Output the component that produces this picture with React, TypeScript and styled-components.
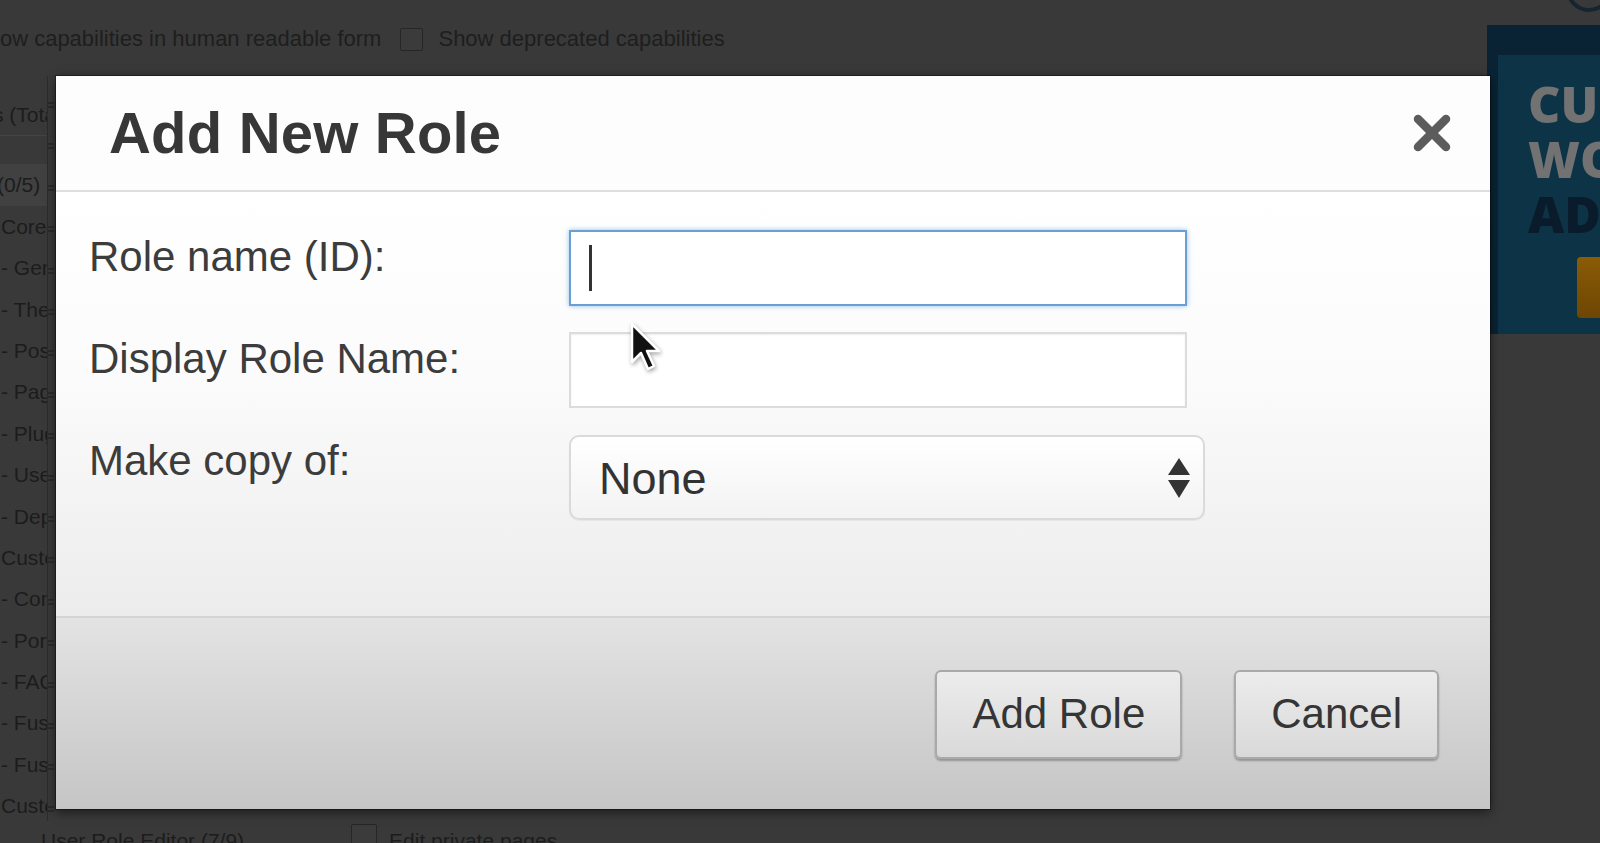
import React from 'react'
import styled, { createGlobalStyle } from 'styled-components'

const GlobalStyle = createGlobalStyle`
    html, body {
        margin: 0;
        padding: 0;
        background: #393939;
        overflow: hidden;
    }
    * { box-sizing: border-box; }
`

const listRows = [
    'Core capabilities',
    '- General',
    '- Themes',
    '- Posts',
    '- Pages',
    '- Plugins',
    '- Users',
    '- Deprecated',
    'Custom capabilities',
    '- Contact Form',
    '- Portfolio',
    '- FAQ',
    '- Fusion Builder',
    '- Fusion Slider',
    'Custom post types',
]

const App = () => {
    return (
        <>
            <GlobalStyle />
            <Page>
                <MainColumn>
                    <TopBar>
                        <OptionText $clip>Show capabilities in human readable form</OptionText>
                        <Checkbox />
                        <OptionText>Show deprecated capabilities</OptionText>
                    </TopBar>
                    <CapsArea>
                        <CapsList>
                            <ListRow $shift={-8}>s (Total 97)</ListRow>
                            <ListDivider />
                            <ListRow $band $shift={-4}>(0/5)</ListRow>
                            {listRows.map((text, index) => (
                                <ListRow key={`cap-row-${index}`}>{text}</ListRow>
                            ))}
                        </CapsList>
                        <Splitter />
                    </CapsArea>
                    <BottomBar>
                        <BottomText>User Role Editor (7/9)</BottomText>
                        <BottomOption>
                            <Checkbox />
                            <BottomText>Edit private pages</BottomText>
                        </BottomOption>
                    </BottomBar>
                </MainColumn>
                <Sidebar>
                    <AvatarStrip>
                        <Avatar />
                    </AvatarStrip>
                    <AdBox>
                        <AdInner>
                            <AdLine $tone="light">CU</AdLine>
                            <AdLine $tone="light">WO</AdLine>
                            <AdLine $tone="dark">AD</AdLine>
                            <AdButton />
                        </AdInner>
                    </AdBox>
                </Sidebar>

                <Dialog>
                    <Header>
                        <Title>Add New Role</Title>
                        <CloseButton aria-label="Close">
                            <svg width="38" height="38" viewBox="0 0 38 38">
                                <path d="M5 5 L33 33 M33 5 L5 33" stroke="#5c5c5c" strokeWidth="8.5" strokeLinecap="round" />
                            </svg>
                        </CloseButton>
                    </Header>
                    <Body>
                        <Label>Role name (ID):</Label>
                        <TextField $focused>
                            <Caret />
                        </TextField>
                        <Label>Display Role Name:</Label>
                        <TextField />
                        <Label>Make copy of:</Label>
                        <SelectField>
                            <SelectValue>None</SelectValue>
                            <svg width="22" height="40" viewBox="0 0 22 40">
                                <path d="M11 0 L22 17 L0 17 Z M0 22 L22 22 L11 40 Z" fill="#333" />
                            </svg>
                        </SelectField>
                    </Body>
                    <Footer>
                        <Button>Add Role</Button>
                        <Button>Cancel</Button>
                    </Footer>
                </Dialog>

                <Pointer width="32" height="52" viewBox="0 0 32 52">
                    <path
                        d="M2 2 L2 40 L11 31 L18 47 L24 44 L17 29 L29 29 Z"
                        fill="#111"
                        stroke="#fff"
                        strokeWidth="2.5"
                        strokeLinejoin="round"
                    />
                </Pointer>
            </Page>
        </>
    )
}

const Page = styled.div`
    position: relative;
    width: 1600px;
    height: 843px;
    overflow: hidden;
    display: flex;
    font-family: "Liberation Sans", Arial, sans-serif;
    background: #393939;
`

const MainColumn = styled.div`
    flex: 1 1 auto;
    display: flex;
    flex-flow: column nowrap;
    min-width: 0;
`

const TopBar = styled.div`
    height: 76px;
    flex: 0 0 auto;
    display: flex;
    align-items: center;
    padding-top: 2px;
`

const OptionText = styled.span<{ $clip?: boolean }>`
    font-size: 22px;
    color: #1e1e1e;
    white-space: nowrap;
    margin: ${p => (p.$clip ? '0 19px 0 -27px' : '0 0 0 15px')};
`

const Checkbox = styled.span`
    display: inline-block;
    width: 23px;
    height: 23px;
    border: 1px solid #262626;
    border-radius: 2px;
    background: #3b3b3b;
    flex: 0 0 auto;
`

const CapsArea = styled.div`
    flex: 1 1 auto;
    display: flex;
    min-height: 0;
    overflow: hidden;
`

const CapsList = styled.div`
    width: 47px;
    flex: 0 0 auto;
    display: flex;
    flex-flow: column nowrap;
    padding-top: 18px;
    overflow: hidden;
`

const Splitter = styled.div`
    width: 7px;
    flex: 0 0 auto;
    border-left: 1px solid #2c2c2c;
    background: repeating-linear-gradient(
        transparent 0px,
        transparent 26px,
        #2a2a2a 26px,
        #2a2a2a 28px,
        transparent 28px,
        transparent 30px,
        #2a2a2a 30px,
        #2a2a2a 32px,
        transparent 32px,
        transparent 41.4px
    );
`

const ListRow = styled.div<{ $band?: boolean; $shift?: number }>`
    flex: 0 0 auto;
    height: 41.4px;
    line-height: 41.4px;
    font-size: 21px;
    color: #1c1c1c;
    white-space: nowrap;
    padding-left: 1px;
    margin-left: ${p => p.$shift || 0}px;
    background: ${p => (p.$band ? '#414141' : 'transparent')};
`

const ListDivider = styled.div`
    flex: 0 0 auto;
    height: 29px;
    border-top: 1px solid #444;
`

const BottomBar = styled.div`
    height: 22px;
    flex: 0 0 auto;
    display: flex;
    align-items: flex-start;
    padding: 4px 0 0 41px;
    gap: 107px;
`

const BottomText = styled.span`
    font-size: 21px;
    color: #1c1c1c;
    white-space: nowrap;
    margin-top: 4px;
`

const BottomOption = styled.div`
    display: flex;
    align-items: flex-start;
    gap: 12px;
    ${Checkbox} {
        width: 26px;
        height: 26px;
        margin-top: -1px;
    }
`

const Sidebar = styled.div`
    width: 113px;
    flex: 0 0 auto;
    display: flex;
    flex-flow: column nowrap;
`

const AvatarStrip = styled.div`
    height: 25px;
    display: flex;
    justify-content: flex-end;
    overflow: hidden;
`

const Avatar = styled.div`
    width: 46px;
    height: 46px;
    margin: -34px -12px 0 0;
    border-radius: 50%;
    border: 4px solid #142430;
`

const AdBox = styled.div`
    height: 309px;
    background: #0a2334;
    padding: 30px 0 0 11px;
    overflow: hidden;
`

const AdInner = styled.div`
    height: 100%;
    background: #0d3347;
    padding: 22px 0 0 30px;
    display: flex;
    flex-flow: column nowrap;
    overflow: hidden;
`

const AdLine = styled.div<{ $tone: 'light' | 'dark' }>`
    font-family: "Open Sans", "Liberation Sans", sans-serif;
    font-weight: 800;
    font-size: 50px;
    line-height: 55px;
    height: 55px;
    white-space: nowrap;
    color: ${p => (p.$tone === 'light' ? '#727272' : '#0a1c2c')};
`

const AdButton = styled.div`
    margin: 15px 0 0 49px;
    width: 60px;
    height: 61px;
    border-radius: 4px;
    background: linear-gradient(#8a5c06, #6e4604);
`

const Dialog = styled.div`
    position: absolute;
    left: 56px;
    top: 76px;
    width: 1434px;
    height: 733px;
    display: flex;
    flex-flow: column nowrap;
    background: #fff;
    box-shadow: 0 0 0 1px rgba(0, 0, 0, 0.35), 0 3px 10px rgba(0, 0, 0, 0.55);
`

const Header = styled.div`
    height: 116px;
    flex: 0 0 auto;
    display: flex;
    align-items: center;
    justify-content: space-between;
    padding: 0 39px 0 53px;
    background: #fdfdfd;
    border-bottom: 2px solid #dedede;
`

const Title = styled.h1`
    margin: 0;
    font-size: 58px;
    line-height: 66px;
    font-weight: 700;
    color: #373737;
    letter-spacing: 0.2px;
`

const CloseButton = styled.button`
    border: 0;
    padding: 0;
    background: transparent;
    display: flex;
    cursor: pointer;
`

const Body = styled.div`
    flex: 1 1 auto;
    display: grid;
    grid-template-columns: 480px auto;
    align-content: start;
    justify-content: start;
    row-gap: 26px;
    padding: 38px 0 0 33px;
    background: linear-gradient(#ffffff 0%, #fbfbfb 45%, #ececec 100%);
`

const Label = styled.label`
    font-size: 42px;
    line-height: 50px;
    padding-top: 2px;
    color: #3c3c3c;
    white-space: nowrap;
`

const TextField = styled.div<{ $focused?: boolean }>`
    width: 618px;
    height: 76px;
    display: flex;
    align-items: center;
    padding-left: 18px;
    background: #fff;
    border: 2px solid ${p => (p.$focused ? '#6a9fd3' : '#dcdcdc')};
    box-shadow: ${p =>
        p.$focused
            ? '0 0 5px rgba(60, 140, 210, 0.55)'
            : 'inset 0 1px 2px rgba(0, 0, 0, 0.07)'};
`

const Caret = styled.span`
    width: 3px;
    height: 46px;
    background: #333;
`

const SelectField = styled.div`
    width: 636px;
    height: 85px;
    margin-top: 1px;
    display: flex;
    align-items: center;
    justify-content: space-between;
    padding: 0 13px 0 28px;
    border: 2px solid #dadada;
    border-radius: 10px;
    background: linear-gradient(#ffffff, #f3f3f3);
    box-shadow: 0 1px 1px rgba(0, 0, 0, 0.05);
`

const SelectValue = styled.span`
    font-size: 45px;
    color: #333;
    padding-top: 2px;
`

const Footer = styled.div`
    height: 193px;
    flex: 0 0 auto;
    display: flex;
    align-items: center;
    justify-content: flex-end;
    gap: 52px;
    padding: 1px 51px 0 0;
    border-top: 2px solid #d4d4d4;
    background: linear-gradient(#e3e3e3, #c5c5c5);
`

const Button = styled.button`
    height: 89px;
    padding: 0 35px;
    font-family: "Liberation Sans", Arial, sans-serif;
    font-size: 42px;
    color: #353535;
    border: 2px solid #a9a9a9;
    border-radius: 6px;
    background: linear-gradient(#ececec, #d9d9d9);
    box-shadow: 0 2px 2px rgba(0, 0, 0, 0.28);
    cursor: pointer;
`

const Pointer = styled.svg`
    position: absolute;
    left: 630px;
    top: 322px;
    filter: drop-shadow(1px 2px 2px rgba(0, 0, 0, 0.35));
`

export default App
